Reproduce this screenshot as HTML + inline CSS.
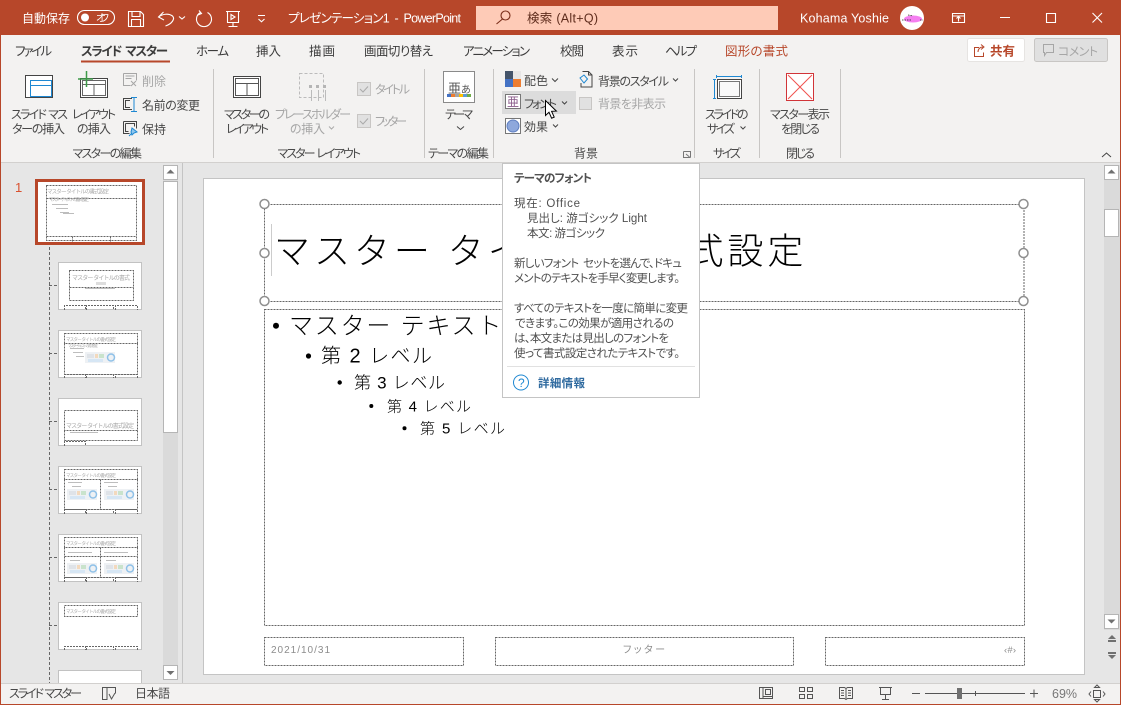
<!DOCTYPE html>
<html lang="ja"><head><meta charset="utf-8"><title>PowerPoint</title>
<style>
html,body{margin:0;padding:0;width:1121px;height:705px;overflow:hidden;background:#e6e6e6}
svg{display:block}
text{font-family:"Liberation Sans","Noto Sans CJK JP",sans-serif;font-size:12px;fill:#484848;font-feature-settings:"palt"}
.w text,text.w{fill:#fff}
.g text,text.g{fill:#a6a6a6}
.tab text{font-size:12.5px;fill:#3c3c3c}
.s text{fill:#000;font-feature-settings:normal;font-weight:300}
.tt text{font-size:11.5px;fill:#505050}
.d{fill:none;stroke:#666;stroke-width:1;stroke-dasharray:2 1}
.f{fill:#fff;stroke:#c2c2c2}
.b{fill:#fff;stroke:#b5b5b5}
.ln{stroke:#444;fill:none}
.mini text{font-size:5.5px;fill:#a8a8a8;font-feature-settings:normal}
.sm{stroke:#bdbdbd;stroke-width:1;fill:none}
</style></head><body>
<svg xmlns="http://www.w3.org/2000/svg" width="1121" height="705" viewBox="0 0 1121 705">
<rect width="1121" height="705" fill="#e6e6e6"/>

<!-- title bar -->
<rect width="1121" height="35" fill="#b7472a"/>
<g class="w">
<text x="22" y="22.500" textLength="48">自動保存</text>
<text x="96" y="21.500" style="font-size:10px" textLength="13">オフ</text>
<text x="288" y="22.500" textLength="173" style="font-size:12.500px">プレゼンテーション1&#160;&#160;-&#160;&#160;PowerPoint</text>
<text x="800" y="22.500" textLength="89" style="font-size:12.500px">Kohama Yoshie</text>
</g>
<g fill="none" stroke="#fff" stroke-width="1.100">
<rect x="77.500" y="10.500" width="37" height="14" rx="7"/>
<path d="M128.500 11.500h12l3 3v12h-15zM132 11.500v5h8v-5M131.500 26v-6.500h9V26"/>
<path d="M163.500 12l-5 5 5.500 3M158.500 17c4-3 10-4 14-1 3 3-1 8-7 10"/>
<path d="M179 16.500l3 2.500 3-2.500"/>
<path d="M200.500 12.500a7.500 7.500 0 1 0 7 0M199 10.500l2.500 3-3.500 1.500"/>
<path d="M226 11.500h14M227.500 11.500v11h11v-11M233 22.500v4M228.500 26.500h9M231 14.500l4 2.500-4 2.500z"/>
<path d="M258 15.500h7M258.500 19l3 2.800 3-2.800"/>
<path d="M952.500 13.500h12v9h-12zM952.500 16h12M958.500 21.500v-4.500M956.500 18.500l2-2 2 2"/>
<path d="M1000 17.500h10M1046.500 13.500h9v9h-9zM1092.500 13l9.500 9.500M1102 13l-9.500 9.500"/>
</g>
<circle cx="85" cy="17.500" r="4" fill="#fff"/>
<rect x="476" y="6" width="302" height="24" fill="#fecbb7"/>
<path d="M510 15.500a4.500 4.500 0 1 1-9 0a4.500 4.500 0 1 1 9 0zM502.500 19l-6 5" fill="none" stroke="#7a2e1a" stroke-width="1.100"/>
<text x="527" y="22.500" textLength="71" style="fill:#5e2c1c;font-size:12.500px">検索 (Alt+Q)</text>
<circle cx="912" cy="18" r="12" fill="#fff"/>
<ellipse cx="913" cy="19" rx="9" ry="3.500" fill="#f47ef0"/>
<path d="M902 20h9M908 15l5 1M920 20h3" stroke="#222" stroke-width=".8" stroke-dasharray="1.500 1" fill="none"/>

<!-- ribbon -->
<rect x="1" y="35" width="1119" height="127" fill="#f3f2f1"/>
<rect x="1" y="162" width="1119" height="1" fill="#d2d0ce"/>
<g class="tab">
<text x="15" y="55.500" textLength="37">ファイル</text>
<text x="81" y="55.500" textLength="87" style="font-weight:700">スライド&#160;&#160;マスター</text>
<text x="196" y="55.500" textLength="33">ホーム</text>
<text x="256" y="55.500" textLength="25">挿入</text>
<text x="309" y="55.500" textLength="26">描画</text>
<text x="364" y="55.500" textLength="69">画面切り替え</text>
<text x="463" y="55.500" textLength="67">アニメーション</text>
<text x="560" y="55.500" textLength="24">校閲</text>
<text x="612" y="55.500" textLength="26">表示</text>
<text x="665" y="55.500" textLength="32">ヘルプ</text>
<text x="725" y="55.500" textLength="63" style="fill:#b7472a">図形の書式</text>
</g>
<rect x="81" y="60.500" width="89" height="2" fill="#b7472a"/>
<rect x="967.500" y="38.500" width="57" height="23" rx="2" fill="#fff" stroke="#e6e4e2"/>
<path d="M979 47.500h-4.500v9h9v-4M978 52c0-3 2-5 5-5M981 44.500l3 2.500-3 2.500" fill="none" stroke="#b7472a"/>
<text x="990" y="55.500" textLength="25" style="font-weight:700;fill:#b7472a;font-size:12.500px">共有</text>
<rect x="1034.500" y="38.500" width="73" height="23" rx="2" fill="#e0e0e0" stroke="#c8c6c4"/>
<path d="M1043.500 44.500h10v8h-7l-2 3v-3h-1z" fill="none" stroke="#a6a6a6"/>
<text class="g" x="1058" y="55.500" textLength="40">コメント</text>

<path d="M213.500 69v89M424.500 69v89M493.500 69v89M694.500 69v89M759.500 69v89M840.500 69v89" stroke="#c8c6c4"/>

<!-- icons group 1 -->
<rect x="25.500" y="75.500" width="27" height="22" fill="#fff" stroke="#444"/>
<rect x="30.500" y="80.500" width="21" height="16" fill="#fff" stroke="#1e88d2"/>
<path d="M30.500 85.500h21" stroke="#1e88d2"/>
<rect x="80.500" y="78.500" width="27" height="19" fill="#fff" stroke="#444"/>
<path d="M82.500 80.500h23v15h-23zM82.500 84.500h23M94 84.500v11" fill="none" stroke="#666"/>
<path d="M86.500 71v16M78 79h15" stroke="#3d9a48" stroke-width="1.500"/>
<path d="M123.500 73.500h13v7M123.500 73.500v12h7M125.500 76h9M125.500 78.500h6M131 81l5 5M136 81l-5 5" fill="none" stroke="#a6a6a6"/>
<path d="M132 98.500h-8.500v11h8.500M130 100.500h-4.500v7h4.500" class="ln"/>
<path d="M131 97.500h6M134 97.500v14M131 111.500h6" fill="none" stroke="#1e88d2"/>
<path d="M123.500 121.500h13v7M123.500 121.500v12h6M125.500 123.500h9v3M125.500 123.500v8h3" class="ln"/>
<path d="M129 136l3-3M132 128l5 4-3 1-2 2-1-3z" fill="#8ec6ee" stroke="#1e88d2"/>
<g>
<text x="11" y="118.500" textLength="57">スライド&#160;&#160;マス</text>
<text x="12" y="133" textLength="53">ターの挿入</text>
<text x="72" y="118.500" textLength="44">レイアウト</text>
<text x="77" y="133" textLength="34">の挿入</text>
<text class="g" x="142" y="85.500" textLength="24">削除</text>
<text x="142" y="109.500" textLength="58">名前の変更</text>
<text x="142" y="133.500" textLength="24">保持</text>
<text x="72.500" y="157.500" textLength="69.500">マスターの編集</text>
</g>

<!-- group 2 -->
<rect x="233.500" y="76.500" width="27" height="21" fill="#fff" stroke="#444"/>
<path d="M235.500 78.500h23v17h-23zM235.500 83.500h23M247 83.500v12" fill="none" stroke="#555"/>
<rect x="299.500" y="73.500" width="24" height="24" fill="none" stroke="#bbb" stroke-dasharray="3 2"/>
<path d="M309 86.500h3M316 86.500h3M323 86.500h3" stroke="#b5b5b5" stroke-width="3"/>
<path d="M311.500 90v11M318.500 90v11M325.500 90v11" stroke="#bbb"/>
<rect x="357.500" y="82.500" width="13" height="13" fill="#e1e1e1" stroke="#c8c6c4"/>
<path d="M360 89l3 3 5-5.500" fill="none" stroke="#aaa"/>
<rect x="357.500" y="114.500" width="13" height="13" fill="#e1e1e1" stroke="#c8c6c4"/>
<path d="M360 121l3 3 5-5.500M329 126.500l2.500 2.500 2.500-2.500" fill="none" stroke="#aaa"/>
<text x="224" y="118.500" textLength="46">マスターの</text>
<text x="226" y="133" textLength="43">レイアウト</text>
<text class="g" x="275" y="118.500" textLength="76">プレースホルダー</text>
<text class="g" x="290" y="133" textLength="35">の挿入</text>
<text class="g" x="375" y="93.500" textLength="35">タイトル</text>
<text class="g" x="375" y="125.500" textLength="32">フッター</text>
<text x="277.500" y="157.500" textLength="83.500">マスター&#160;&#160;レイアウト</text>

<!-- group 3 -->
<rect x="443.500" y="71.500" width="31" height="31" fill="#fff" stroke="#8a8a8a"/>
<text x="448" y="93" style="font-size:13px;fill:#555">亜</text>
<text x="461" y="93" style="font-size:10px;fill:#555">あ</text>
<rect x="447" y="94" width="4" height="3" fill="#4472c4"/><rect x="451" y="94" width="4" height="3" fill="#ed7d31"/><rect x="455" y="94" width="4" height="3" fill="#a5a5a5"/><rect x="459" y="94" width="4" height="3" fill="#ffc000"/><rect x="463" y="94" width="4" height="3" fill="#5b9bd5"/><rect x="467" y="94" width="4" height="3" fill="#70ad47"/>
<text x="445" y="118.500" textLength="28">テーマ</text>
<path d="M457 126.500l3.500 3 3.500-3" class="ln"/>
<text x="428" y="157.500" textLength="61">テーマの編集</text>

<!-- group 4 -->
<rect x="502" y="91" width="74" height="23" fill="#dcdcdc"/>
<rect x="505" y="71" width="8" height="8" fill="#44546a"/><rect x="513" y="71" width="8" height="8" fill="#e7e6e6"/>
<rect x="505" y="79" width="8" height="8" fill="#4472c4"/><rect x="513" y="79" width="8" height="8" fill="#ed7d31"/>
<rect x="505.500" y="94.500" width="15" height="14" fill="#fff" stroke="#777"/>
<text x="507" y="106" style="font-size:12px;fill:#8a5a8a">亜</text>
<rect x="505.500" y="118.500" width="15" height="15" fill="#fff" stroke="#777"/>
<circle cx="513" cy="126" r="6" fill="#8ea8dc" stroke="#5f7fc0"/>
<text x="524" y="85" textLength="24">配色</text>
<text x="524" y="108" textLength="33">フォント</text>
<text x="524" y="131" textLength="24">効果</text>
<path d="M552 78.500l3 3 3-3M562 101.500l2.500 2.500 2.500-2.500M553 124.500l2.500 2.500 2.500-2.500M673 78.500l2.500 2.500 2.500-2.500" class="ln"/>
<path d="M582.500 71.500h6l3.500 3.500v12h-11v-4M588.500 71.500v3.500h3.500" class="ln"/>
<path d="M580 78l4-3 3.500 4-3.500 4z" fill="none" stroke="#1e88d2"/>
<text x="598" y="85.500" textLength="71">背景のスタイル</text>
<rect x="579.500" y="97.500" width="12" height="12" fill="#e1e1e1" stroke="#c8c6c4"/>
<text class="g" x="598" y="108" textLength="68">背景を非表示</text>
<text x="574" y="157.500" textLength="24">背景</text>
<path d="M683.500 151.500h7v6M683.500 151.500v6h7M686 154l3.500 3" fill="none" stroke="#777"/>

<!-- group 5,6 -->
<path d="M716 76.500h26M716.500 75v3M741.500 75v3M714.500 79v20M713 79.500h3M713 98.500h3" fill="none" stroke="#1e88d2"/>
<rect x="717.500" y="79.500" width="24" height="19" fill="#fff" stroke="#444"/>
<rect x="719.500" y="81.500" width="20" height="15" fill="#f9f9f9" stroke="#777"/>
<text x="705" y="118.500" textLength="43.500">スライドの</text>
<text x="707" y="133" textLength="28">サイズ</text>
<path d="M740.500 126.500l2.500 2.500 2.500-2.500" class="ln"/>
<text x="713" y="157.500" textLength="28">サイズ</text>
<rect x="786.500" y="73.500" width="27" height="27" fill="#fff" stroke="#d13438"/>
<path d="M788 75l24 24M812 75l-24 24" stroke="#f0524f"/>
<text x="770" y="118.500" textLength="60">マスター表示</text>
<text x="781" y="133" textLength="39">を閉じる</text>
<text x="786" y="157.500" textLength="29">閉じる</text>
<path d="M1102 157l4.500-4 4.500 4" class="ln"/>

<!-- borders -->
<rect x="0" y="35" width="1" height="670" fill="#b7472a"/>
<rect x="1120" y="35" width="1" height="670" fill="#b7472a"/>

<!-- selected thumbnail -->
<text x="15" y="192" style="font-size:13px;fill:#d9512f">1</text>
<rect x="36.500" y="180.500" width="107" height="63" fill="#fff" stroke="#b7472a" stroke-width="3"/>
<g class="mini">
<path class="d" d="M46.500 185.500h90v55h-90zM46.500 198.500h90M46.500 236.500h90M72.500 236.500v5M110.500 236.500v5"/>
<text x="47" y="193.500" textLength="62">マスター タイトルの書式設定</text>
<text x="49" y="201" style="font-size:4.500px" textLength="40">マスター テキストの書式設定</text>
<path class="sm" d="M52 204.500h16M56 208.500h12M60 212.500h9M63 213.500h11"/>
</g>

<!-- tree -->
<path d="M49.500 247v436M49 285.500h9M49 353.500h9M49 421.500h9M49 489.500h9M49 557.500h9M49 625.500h9" fill="none" stroke="#666" stroke-dasharray="3 2"/>

<!-- thumbs -->
<g class="mini">
<defs><g id="pic"><rect width="30" height="11" fill="#eef1f4"/><rect x="2" y="2" width="7" height="4" fill="#dfe3e8"/><rect x="10" y="2" width="3" height="4" fill="#f3d9bd"/><rect x="14" y="2" width="5" height="4" fill="#c9e3cc"/><rect x="3" y="7" width="15" height="3" fill="#d6e6f4"/><circle cx="26" cy="5.500" r="3.500" fill="none" stroke="#8fc1e8" stroke-width="1.500"/></g></defs>

<rect class="f" x="58.500" y="262.500" width="83" height="47"/>
<path class="d" d="M69.500 270.500h64v30h-64zM69.500 287.500h64M64.500 310v-4.500h21v4.500M86.500 310v-4.500h27v4.500M115.500 310v-4.500h22v4.500"/>
<text x="72" y="280" textLength="58" style="font-size:6px">マスター タイトルの書式</text>
<rect x="96" y="282" width="10" height="3" fill="#ddd"/>
<path class="sm" d="M85 288.500h30"/>

<rect class="f" x="58.500" y="330.500" width="83" height="47"/>
<path class="d" d="M64.500 333.500h73v10h-73zM64.500 343.500v31M137.500 343.500v31M64.500 374.500h73M64.500 378v-3.500h21v3.500M86.500 378v-3.500h27v3.500M115.500 378v-3.500h22v3.500"/>
<text x="66" y="341" textLength="50" style="font-size:4.500px">マスター タイトルの書式設定</text>
<text x="68" y="347" textLength="30" style="font-size:3.500px">マスター テキストの書式設定</text>
<path class="sm" d="M70 348.500h14M73 352.500h10M76 356.500h8"/>
<use href="#pic" x="85" y="352"/>

<rect class="f" x="58.500" y="398.500" width="83" height="47"/>
<path class="d" d="M64.500 410.500h73v20h-73zM64.500 430.500v10M137.500 430.500v10M64.500 440.500h73M64.500 446v-4.500h21v4.500"/>
<text x="66" y="428" textLength="68" style="font-size:6px">マスター タイトルの書式設定</text>
<path class="sm" d="M70 432.500h28"/>

<rect class="f" x="58.500" y="466.500" width="83" height="47"/>
<path class="d" d="M64.500 469.500h73v10h-73zM64.500 479.500v30M137.500 479.500v30M100.500 479.500v30M64.500 509.500h73M64.500 514v-4.500h21v4.500M86.500 514v-4.500h27v4.500M115.500 514v-4.500h22v4.500"/>
<text x="66" y="477" textLength="50" style="font-size:4.500px">マスター タイトルの書式設定</text>
<path class="sm" d="M68 482.500h14M72 486.500h9M104 482.500h14M108 486.500h9"/>
<use href="#pic" x="67" y="489"/><use href="#pic" x="104" y="489"/>

<rect class="f" x="58.500" y="534.500" width="83" height="47"/>
<path class="d" d="M64.500 537.500h73v10h-73zM64.500 547.500v30M137.500 547.500v30M100.500 547.500v30M64.500 556.500h73M64.500 577.500h73M64.500 582v-4.500h21v4.500M86.500 582v-4.500h27v4.500M115.500 582v-4.500h22v4.500"/>
<text x="66" y="545" textLength="50" style="font-size:4.500px">マスター タイトルの書式設定</text>
<path class="sm" d="M68 552.500h24M104 552.500h24M70 560.500h10M106 560.500h10"/>
<use href="#pic" x="67" y="563"/><use href="#pic" x="104" y="563"/>

<rect class="f" x="58.500" y="602.500" width="83" height="47"/>
<path class="d" d="M64.500 605.500h73v11h-73zM64.500 650v-3.500h21v3.500M86.500 650v-3.500h27v3.500M115.500 650v-3.500h22v3.500"/>
<text x="66" y="613" textLength="50" style="font-size:4.500px">マスター タイトルの書式設定</text>

<rect class="f" x="58.500" y="670.500" width="83" height="20"/>
</g>

<!-- thumb scrollbar -->
<rect x="163" y="165" width="15" height="515" fill="#dadada"/>
<rect class="b" x="163.500" y="165.500" width="14" height="14"/>
<rect class="b" x="163.500" y="181.500" width="14" height="251"/>
<rect class="b" x="163.500" y="665.500" width="14" height="14"/>
<path d="M170.500 169.500l4 4h-8zM166.500 671h8l-4 4z" fill="#707070"/>
<rect x="182" y="163" width="1" height="520" fill="#c4c4c4"/>

<!-- slide -->
<rect x="203.500" y="178.500" width="881" height="496" fill="#fff" stroke="#c4c4c4"/>
<path class="d" d="M264.500 204.500h759.500v97h-759.500zM264.500 309.500h760v316h-760zM264.500 637.500h199v28h-199zM495.500 637.500h298v28h-298zM825.500 637.500h199v28h-199z"/>
<rect x="271" y="224" width="1" height="52" fill="#ccc"/>
<g class="s">
<text x="274" y="263.500" style="font-size:36px;letter-spacing:3.950px">マスター タイトルの書式設定</text>
<text x="289" y="334" style="font-size:24px;letter-spacing:1.800px">マスター テキストの書式設定</text>
<text x="321" y="362.600" style="font-size:20px" textLength="111">第 2 レベル</text>
<text x="354" y="388.500" style="font-size:17px" textLength="91">第 3 レベル</text>
<text x="387" y="411.700" style="font-size:15px" textLength="84">第 4 レベル</text>
<text x="420" y="433.700" style="font-size:15px" textLength="85">第 5 レベル</text>
</g>
<circle cx="276" cy="325.700" r="3" fill="#000"/><circle cx="308.500" cy="356" r="2.600" fill="#000"/><circle cx="339.700" cy="382.500" r="2.200" fill="#000"/><circle cx="371.300" cy="406" r="2" fill="#000"/><circle cx="404.500" cy="428.300" r="2" fill="#000"/>
<text x="271" y="653" textLength="59" style="font-size:10px;fill:#8c8c8c">2021/10/31</text>
<text x="623" y="653" textLength="42" style="font-size:10px;fill:#8c8c8c">フッター</text>
<text x="1004" y="653" textLength="12" style="font-size:9.500px;fill:#8c8c8c">‹#›</text>
<g fill="#fff" stroke="#8f8f8f" stroke-width="1.500">
<circle cx="264.500" cy="204" r="4.500"/><circle cx="1023.500" cy="204" r="4.500"/>
<circle cx="264.500" cy="253" r="4.500"/><circle cx="1023.500" cy="253" r="4.500"/>
<circle cx="264.500" cy="301" r="4.500"/><circle cx="1023.500" cy="301" r="4.500"/>
</g>

<!-- tooltip -->
<rect x="502.500" y="163.500" width="197" height="234" fill="#fff" stroke="#c4c4c4"/>
<g class="tt">
<text x="514" y="182" textLength="78" style="font-weight:700">テーマのフォント</text>
<text x="514" y="207" textLength="66">現在: Office</text>
<text x="527" y="222" textLength="120">見出し: 游ゴシック Light</text>
<text x="527" y="237" textLength="78">本文: 游ゴシック</text>
<text x="514" y="267" textLength="168">新しいフォント&#160;&#160;セットを選んで、ドキュ</text>
<text x="514" y="282" textLength="166">メントのテキストを手早く変更します。</text>
<text x="514" y="312" textLength="174">すべてのテキストを一度に簡単に変更</text>
<text x="515" y="327" textLength="159">できます。この効果が適用されるの</text>
<text x="514" y="342" textLength="155">は、本文または見出しのフォントを</text>
<text x="514" y="357" textLength="166">使って書式設定されたテキストです。</text>
<text x="538" y="387" textLength="47" style="font-weight:700;fill:#2f6a9f">詳細情報</text>
<text x="518" y="387" style="font-size:12px;fill:#1e88d2">?</text>
</g>
<rect x="507" y="366" width="188" height="1" fill="#e1e1e1"/>
<circle cx="521" cy="382.500" r="7.500" fill="none" stroke="#1e88d2"/>

<!-- cursor -->
<path d="M545.500 100.500v15l3.500-3.300 2.600 6 2.600-1.100-2.600-5.800 4.800-.2z" fill="#fff" stroke="#000"/>

<!-- right scrollbar -->
<rect x="1104" y="165" width="16" height="465" fill="#dadada"/>
<rect class="b" x="1104.500" y="165.500" width="14" height="14"/>
<rect class="b" x="1104.500" y="209.500" width="14" height="27"/>
<rect class="b" x="1104.500" y="614.500" width="14" height="14"/>
<path d="M1111.500 169.500l4 4h-8zM1107.500 619.500h8l-4 4zM1112 635l4 4h-8zM1108 640h8v2h-8zM1108 652h8v2h-8zM1108 655h8l-4 4z" fill="#707070"/>

<!-- status bar -->
<rect x="1" y="683" width="1119" height="21" fill="#f3f2f1"/>
<rect x="1" y="683" width="1119" height="1" fill="#d2d0ce"/>
<rect x="0" y="704" width="1121" height="1" fill="#b7472a"/>
<text x="9" y="697.500" textLength="73">スライド&#160;&#160;マスター</text>
<text x="135" y="697.500" textLength="35">日本語</text>
<g fill="none" stroke="#555">
<path d="M102.500 687.500h4.500v12h-4.500zM107 687.500h8.500v6M109 694l2.500 5 3.500-6"/>
<path d="M759.500 687.500h13v11h-13zM763 687.500v11M765.500 689.500h5v5h-5zM763 696.500h9.500"/>
<path d="M799.500 687.500h5v4h-5zM807.500 687.500h5v4h-5zM799.500 694.500h5v4h-5zM807.500 694.500h5v4h-5z"/>
<path d="M839.500 687.500h5l1.500 1 1.500-1h5v11h-5l-1.500 1-1.500-1h-5zM846 688.500v10M841 690.500h3M841 693h3M841 695.500h3M848 690.500h3M848 693h3M848 695.500h3"/>
<path d="M879 687.500h13M880.500 687.500v7h10v-7M885.500 694.500v5M882 699.500h7"/>
<path d="M912 693.500h8M925 693.500h100M975.500 691v5M1030 693.500h8M1034 689.500v8"/>
<path d="M1093.500 690.500h7v7h-7zM1097 685l-2.500 2.500h5zM1097 702l-2.500-2.500h5zM1091 691.500l-2 2.500 2 2.500M1103 691.500l2 2.500-2 2.500"/>
</g>
<rect x="957" y="688" width="5" height="11" fill="#707070"/>
<text x="1052" y="698" textLength="25" style="font-size:12.500px;fill:#777">69%</text>
</svg>
</body></html>
